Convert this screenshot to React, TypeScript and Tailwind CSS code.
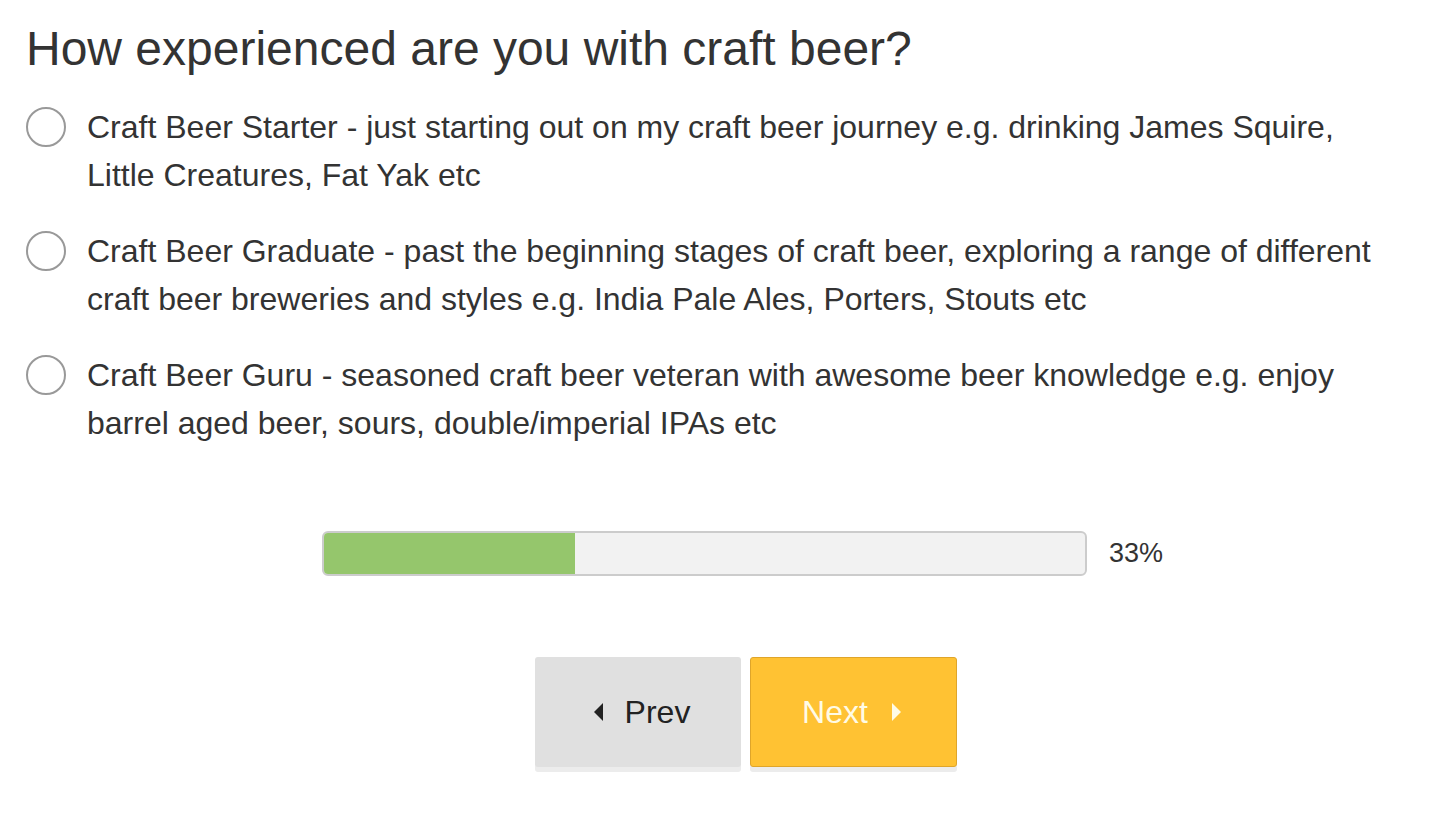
import { useState } from 'react';

const options = [
  'Craft Beer Starter - just starting out on my craft beer journey e.g. drinking James Squire, Little Creatures, Fat Yak etc',
  'Craft Beer Graduate - past the beginning stages of craft beer, exploring a range of different craft beer breweries and styles e.g. India Pale Ales, Porters, Stouts etc',
  'Craft Beer Guru - seasoned craft beer veteran with awesome beer knowledge e.g. enjoy barrel aged beer, sours, double/imperial IPAs etc',
];

export default function App() {
  const [picked, setPicked] = useState<number | null>(null);
  const progress = 33;

  return (
    <main className="min-h-screen bg-white text-[#333] font-['Liberation_Sans',Arial,sans-serif]">
      <div className="pl-[26px] pr-[50px] pt-[19px]">
        <h1 className="text-[48px] leading-[60px] text-[#333]">How experienced are you with craft beer?</h1>

        <div className="mt-[24px] flex flex-col gap-[28px]">
          {options.map((o, i) => (
            <label key={i} className="flex items-start gap-[21px] cursor-pointer" onClick={() => setPicked(i)}>
              <span className="mt-[4px] w-[40px] h-[40px] shrink-0 rounded-full border-2 border-[#999] bg-white flex items-center justify-center">
                {picked === i && <span className="w-[20px] h-[20px] rounded-full bg-[#555]" />}
              </span>
              <span className="text-[32px] leading-[48px] text-[#333]">{o}</span>
            </label>
          ))}
        </div>

        {/* progress */}
        <div className="mt-[84px] ml-[296px] flex items-center gap-[22px]">
          <div className="w-[765px] h-[45px] rounded-[6px] border-2 border-[#ccc] bg-[#f2f2f2] overflow-hidden">
            <div className="h-full bg-[#95c66c]" style={{ width: `${progress}%` }} />
          </div>
          <span className="text-[27px] text-[#333]">{progress}%</span>
        </div>

        {/* nav */}
        <div className="mt-[81px] ml-[509px] flex gap-[9px]">
          <button className="w-[206px] h-[110px] pl-[8px] rounded-[3px] bg-[#e0e0e0] shadow-[0_5px_0_#ececec] flex items-center justify-center gap-[21px] text-[32px] text-[#222]">
            <svg width="10" height="18" viewBox="0 0 10 18"><path d="M9 0 L0 9 L9 18 Z" fill="#222" /></svg>
            Prev
          </button>
          <button className="w-[207px] h-[110px] pr-[4px] rounded-[3px] bg-[#ffc233] border border-[#dfa52a] shadow-[0_5px_0_#ececec] flex items-center justify-center gap-[23px] text-[32px] text-[#fffbe6]">
            Next
            <svg width="10" height="18" viewBox="0 0 10 18"><path d="M1 0 L10 9 L1 18 Z" fill="#fffbe6" /></svg>
          </button>
        </div>
      </div>
    </main>
  );
}
